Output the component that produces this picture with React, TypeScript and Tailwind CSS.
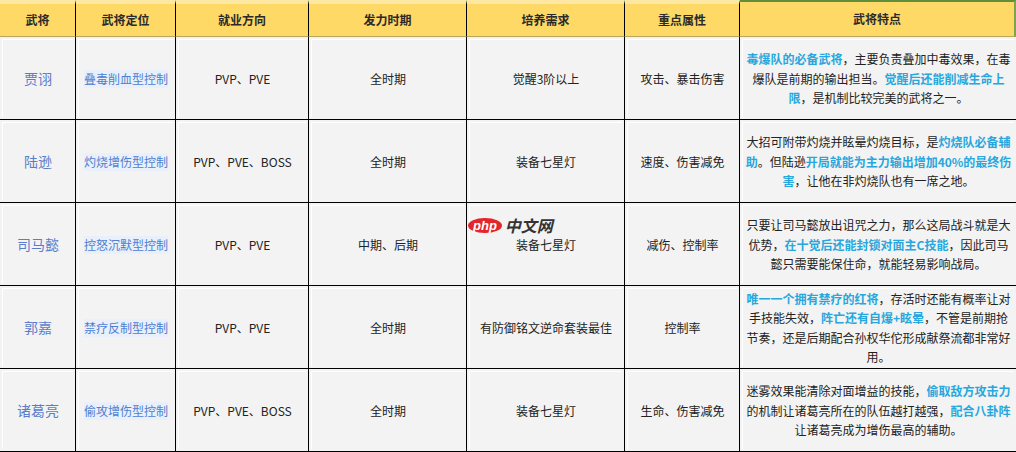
const font = { fontFamily: '"Microsoft YaHei", "Noto Sans CJK SC", "Noto Sans", sans-serif' };

type Seg = string | { h: string };

const headers = ["武将", "武将定位", "就业方向", "发力时期", "培养需求", "重点属性", "武将特点"];

const rows: { name: string; role: string; mode: string; time: string; need: string; attr: string; desc: Seg[][] }[] = [
  {
    name: "贾诩",
    role: "叠毒削血型控制",
    mode: "PVP、PVE",
    time: "全时期",
    need: "觉醒3阶以上",
    attr: "攻击、暴击伤害",
    desc: [
      [{ h: "毒爆队的必备武将" }, "，主要负责叠加中毒效果，在毒"],
      ["爆队是前期的输出担当。", { h: "觉醒后还能削减生命上" }],
      [{ h: "限" }, "，是机制比较完美的武将之一。"],
    ],
  },
  {
    name: "陆逊",
    role: "灼烧增伤型控制",
    mode: "PVP、PVE、BOSS",
    time: "全时期",
    need: "装备七星灯",
    attr: "速度、伤害减免",
    desc: [
      ["大招可附带灼烧并眩晕灼烧目标，是", { h: "灼烧队必备辅" }],
      [{ h: "助" }, "。但陆逊", { h: "开局就能为主力输出增加40%的最终伤" }],
      [{ h: "害" }, "，让他在非灼烧队也有一席之地。"],
    ],
  },
  {
    name: "司马懿",
    role: "控怒沉默型控制",
    mode: "PVP、PVE",
    time: "中期、后期",
    need: "装备七星灯",
    attr: "减伤、控制率",
    desc: [
      ["只要让司马懿放出诅咒之力，那么这局战斗就是大"],
      ["优势，", { h: "在十觉后还能封锁对面主C技能" }, "，因此司马"],
      ["懿只需要能保住命，就能轻易影响战局。"],
    ],
  },
  {
    name: "郭嘉",
    role: "禁疗反制型控制",
    mode: "PVP、PVE",
    time: "全时期",
    need: "有防御铭文逆命套装最佳",
    attr: "控制率",
    desc: [
      [{ h: "唯一一个拥有禁疗的红将" }, "，存活时还能有概率让对"],
      ["手技能失效，", { h: "阵亡还有自爆+眩晕" }, "，不管是前期抢"],
      ["节奏，还是后期配合孙权华佗形成献祭流都非常好"],
      ["用。"],
    ],
  },
  {
    name: "诸葛亮",
    role: "偷攻增伤型控制",
    mode: "PVP、PVE、BOSS",
    time: "全时期",
    need: "装备七星灯",
    attr: "生命、伤害减免",
    desc: [
      ["迷雾效果能清除对面增益的技能，", { h: "偷取敌方攻击力" }],
      ["的机制让诸葛亮所在的队伍越打越强，", { h: "配合八卦阵" }],
      ["让诸葛亮成为增伤最高的辅助。"],
    ],
  },
];

const Cell = ({ children, last }: { children: React.ReactNode; last?: boolean }) => (
  <div className={`h-[83px] bg-[#f3f3f3] border-b border-black ${last ? "" : "border-r"} p-[2px]`}>
    <div className="h-full border-t border-l border-white flex items-center justify-center text-center">
      {children}
    </div>
  </div>
);

export default function App() {
  return (
    <div className="relative w-[1016px] h-[452px] overflow-hidden bg-white text-[12px] text-[#222]" style={font}>
      <div className="grid grid-cols-[76px_100px_133px_158px_158px_115px_276px]">
        {headers.map((h, i) => (
          <div
            key={h}
            className={`h-[37px] flex items-center justify-center font-bold text-[#2a2a2a] bg-[#ffd966] border-b border-[#b9a65e] ${
              i < 6 ? "border-r border-r-black border-t-[4px] border-t-[#fde8a3]" : "border-t-2 border-t-[#5f8f3c] border-r-2 border-r-[#7fa34d]"
            }`}
          >
            {h}
          </div>
        ))}

        {rows.map((r) => (
          <div key={r.name} className="contents">
            <Cell>
              <span className="text-[14px] text-[#5a7ccb]">{r.name}</span>
            </Cell>
            <Cell>
              <span className="text-[#4d80cf] bg-[#e9f0fb]">{r.role}</span>
            </Cell>
            <Cell>{r.mode}</Cell>
            <Cell>{r.time}</Cell>
            <Cell>{r.need}</Cell>
            <Cell>{r.attr}</Cell>
            <Cell last>
              <div className="leading-[19.5px] whitespace-nowrap">
                {r.desc.map((line, li) => (
                  <div key={li}>
                    {line.map((s, si) =>
                      typeof s === "string" ? (
                        <span key={si}>{s}</span>
                      ) : (
                        <span key={si} className="font-semibold text-[#27a7dd]">
                          {s.h}
                        </span>
                      )
                    )}
                  </div>
                ))}
              </div>
            </Cell>
          </div>
        ))}
      </div>

      {/* watermark */}
      <div className="absolute left-[468px] top-[217px] flex items-center gap-[3px] select-none">
        <span
          className="rounded-[50%] bg-[#e3262b] text-white italic font-bold text-[13px] leading-[15px] px-[5px]"
          style={{ fontFamily: '"Liberation Sans", Arial, sans-serif' }}
        >
          php
        </span>
        <span className="italic font-bold text-[16px] leading-[16px] text-[#333]">中文网</span>
      </div>
    </div>
  );
}
